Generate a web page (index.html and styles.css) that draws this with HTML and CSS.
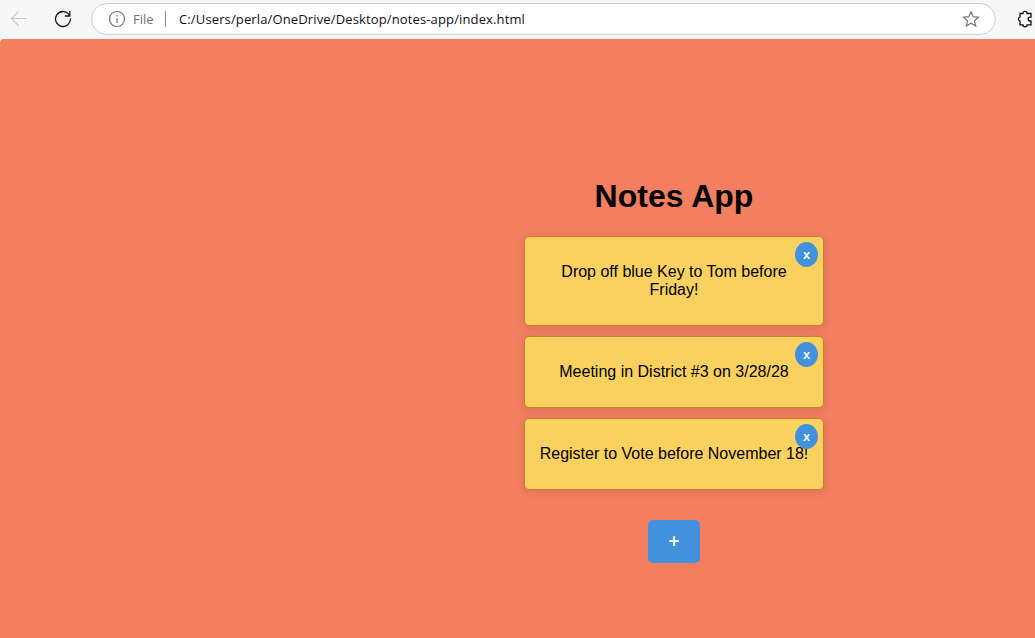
FILE: index.html
```html
<!DOCTYPE html>
<html lang="en">
<head>
<meta charset="utf-8">
<title>Notes App</title>
<link rel="stylesheet" href="styles.css">
</head>
<body>
<header class="toolbar">
  <svg class="icon back" width="18" height="18" viewBox="0 0 18 18"><path d="M17 8.5H1.5M8.5 1.5l-7 7 7 7"/></svg>
  <svg class="icon reload" width="18" height="18" viewBox="0 0 18 18"><path d="M16.5 8.5a7.5 7.5 0 1 1-1.8-4.4L15.8 6M15.8 1v5h-5"/></svg>
  <div class="address">
    <svg class="icon info" width="18" height="18" viewBox="0 0 18 18"><circle cx="9" cy="9" r="7.5"/><path d="M9 8v5M9 5v1.4"/></svg>
    <span class="scheme">File</span>
    <span class="divider"></span>
    <span class="url">C:/Users/perla/OneDrive/Desktop/notes-app/index.html</span>
    <svg class="icon star" width="18" height="18" viewBox="0 0 18 18"><path d="M9 1.7l2.1 5 5.4.5-4 3.6 1.2 5.3L9 13.3l-4.7 2.8 1.2-5.3-4-3.6 5.4-.5z"/></svg>
  </div>
  <svg class="icon puzzle" width="18" height="18" viewBox="0 0 18 18"><path d="M4 3.5h2.9a2.1 2.1 0 0 1 4.2 0H15v3.7h-1a1.9 1.9 0 0 0 0 3.8h1v3.8h-3.9a2.1 2.1 0 0 1-4.2 0H4V11.2a2.2 2.2 0 0 1 0-4.2z"/></svg>
</header>
<main class="page">
  <section class="notes">
    <h1 class="title">Notes App</h1>
    <div class="list">
      <article class="note"><p class="text">Drop off blue Key to Tom before Friday!</p><button class="close">x</button></article>
      <article class="note"><p class="text">Meeting in District #3 on 3/28/28</p><button class="close">x</button></article>
      <article class="note"><p class="text">Register to Vote before November 18!</p><button class="close">x</button></article>
    </div>
    <button class="add">+</button>
  </section>
</main>
</body>
</html>
```
FILE: styles.css
```css
* { box-sizing: border-box; }
body {
  margin: 0;
  height: 638px;
  overflow: hidden;
  display: flex;
  flex-direction: column;
  background: #f7f7f7;
  font-family: "Liberation Sans", Arial, sans-serif;
}
.toolbar {
  height: 39px;
  flex: none;
  display: flex;
  align-items: center;
  padding: 0 0 1px 10px;
  font: 14px "Open Sans", "Noto Sans", sans-serif;
}
.icon { flex: none; fill: none; stroke: #1b1b1b; stroke-width: 1.3; }
.back { stroke: #c8c8c8; stroke-width: 1.1; }
.reload { margin-left: 26px; }
.address {
  width: 905px;
  height: 32px;
  flex: none;
  margin-left: 19px;
  padding: 0 15px 0 16px;
  display: flex;
  align-items: center;
  background: #fff;
  border: 1px solid #d0d0d0;
  border-radius: 16px;
}
.info, .star { stroke: #767676; stroke-width: 1.2; }
.scheme { width: 24px; margin-left: 7px; font-size: 13px; color: #707070; }
.divider { width: 1px; height: 16px; margin: 0 13px 0 8px; background: #8a8a8a; }
.url { font-size: 13px; letter-spacing: .135px; color: #111; white-space: nowrap; }
.star { margin-left: auto; }
.puzzle { margin-left: 20px; stroke: #111; }
.page {
  flex: 1;
  background: #f37e60;
  border-top-left-radius: 4px;
  padding: 139px 0 0 524px;
}
.notes { width: 300px; display: flex; flex-direction: column; align-items: center; }
.title { margin: 0 0 21px; font-size: 32px; line-height: 37px; }
.list { width: 300px; display: flex; flex-direction: column; gap: 10px; }
.note {
  position: relative;
  padding: 10px;
  border: 1px solid #c5822a;
  border-radius: 5px;
  background: #fad15e;
  box-shadow: 0 2px 10px rgba(0, 0, 0, .1);
  text-align: center;
}
.text { margin: 16px 0; font-size: 16px; line-height: 18px; }
.close {
  position: absolute;
  top: 5px;
  right: 5px;
  width: 23px;
  height: 25px;
  padding: 0 0 1px;
  border: 0;
  border-radius: 50%;
  background: #4191dc;
  color: #fff;
  font: 600 13px "Open Sans", sans-serif;
}
.add {
  width: 52px;
  height: 43px;
  margin-top: 30px;
  padding: 0 0 2px;
  border: 0;
  border-radius: 5px;
  background: #4191dc;
  color: #fff;
  font: 600 20px "Open Sans", sans-serif;
}
```
